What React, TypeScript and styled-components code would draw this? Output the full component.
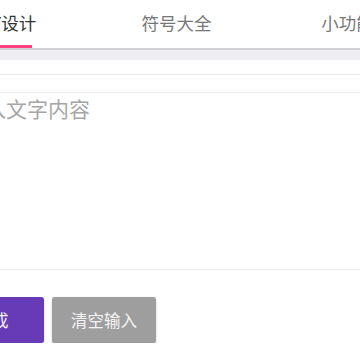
import React from "react";
import styled, { createGlobalStyle } from "styled-components";

const Global = createGlobalStyle`
  html, body { margin: 0; padding: 0; background: #fff; overflow: hidden; }
  body { font-family: Roboto, "Noto Sans CJK SC", "Noto Sans", sans-serif; }
`;

const Page = styled.div`
  width: 440px;
  margin-left: -80px;
  display: flex;
  flex-direction: column;
`;

const TabBar = styled.div`
  display: flex;
  height: 48px;
  border-bottom: 2px solid #cfcfd4;
  background: #fff;
`;

const Tab = styled.div<{ $active?: boolean }>`
  position: relative;
  flex: none;
  width: 171px;
  box-sizing: border-box;
  display: flex;
  align-items: center;
  justify-content: center;
  padding-bottom: 4px;
  font-size: 17.5px;
  white-space: nowrap;
  color: ${(p) => (p.$active ? "#333" : "#777")};
`;

const Indicator = styled.span`
  position: absolute;
  left: 0;
  right: 59px;
  bottom: 0;
  height: 3px;
  background: #ff4081;
`;

const Band = styled.div`
  height: 10px;
  background: #eeeef2;
`;

const FieldLine = styled.div`
  height: 14px;
  border-bottom: 1px solid #ededed;
  margin-bottom: 17px;
`;

const TextArea = styled.textarea`
  display: block;
  box-sizing: border-box;
  width: 100%;
  height: 178px;
  margin: 0;
  padding: 3px 16px 0 23px;
  border: none;
  border-top: 1px solid #eeeeee;
  border-bottom: 1px solid #eeecf8;
  resize: none;
  outline: none;
  font-family: inherit;
  font-size: 21px;
  line-height: 28px;
  color: #333;
  &::placeholder { color: #a6a6a6; }
`;

const ButtonRow = styled.div`
  display: flex;
  gap: 8px;
  padding: 27px 0 0 20px;
`;

const Button = styled.button<{ $tone: "primary" | "muted" }>`
  width: 104px;
  height: 46px;
  border: none;
  border-radius: 3px;
  font-family: inherit;
  font-size: 16.5px;
  color: #f4f4f4;
  background: ${(p) => (p.$tone === "primary" ? "#673ab7" : "#9e9e9e")};
  box-shadow: 0 2px 2px rgba(0, 0, 0, 0.22), 0 0 1px rgba(0, 0, 0, 0.12);
`;

export default function App() {
  return (
    <>
      <Global />
      <Page>
        <TabBar>
          <Tab $active>
            DIY设计
            <Indicator />
          </Tab>
          <Tab>符号大全</Tab>
          <Tab>小功能</Tab>
        </TabBar>
        <Band />
        <FieldLine />
        <TextArea placeholder="请输入文字内容" />
        <ButtonRow>
          <Button $tone="primary">生成</Button>
          <Button $tone="muted">清空输入</Button>
        </ButtonRow>
      </Page>
    </>
  );
}
